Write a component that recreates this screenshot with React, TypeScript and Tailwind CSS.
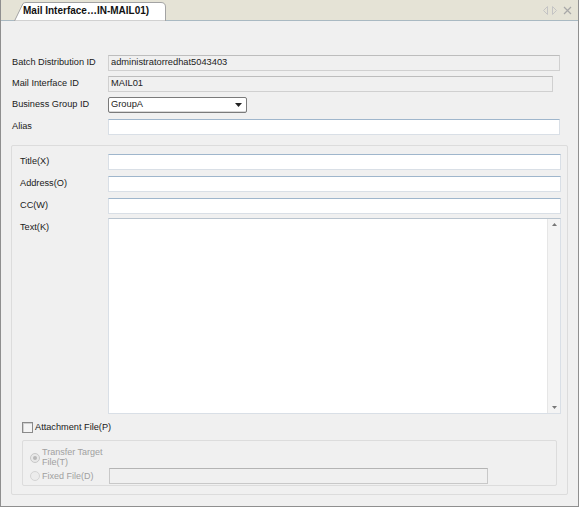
import React from 'react';

const font = "font-['Liberation_Sans',Arial,sans-serif]";

const Label: React.FC<{ children: React.ReactNode; w: string }> = ({ children, w }) => (
  <div className={`${w} shrink-0 text-[9.2px] text-[#1a1a1a] leading-none`}>{children}</div>
);

const ReadOnly: React.FC<{ value: string; right: string }> = ({ value, right }) => (
  <div
    className={`h-[16px] flex-1 ${right} bg-[#f0f0f0] border border-[#d0d0d0] border-t-[#bdbdbd] flex items-center px-[2px] text-[9.3px] text-[#222]`}
  >
    {value}
  </div>
);

const TextInput: React.FC<{ right?: string }> = ({ right = '' }) => (
  <div className={`h-[16px] flex-1 ${right} bg-white border border-[#d9dfe6] border-t-[#9fb6cc]`} />
);

const App: React.FC = () => {
  return (
    <div className={`w-[579px] h-[507px] bg-[#f0f0f0] border-x border-b border-[#8f8f8f] flex flex-col ${font}`}>
      {/* tab bar */}
      <div className="h-[21px] shrink-0 bg-[#e5e3d6] border-b border-[#a9b9c2] flex items-end relative">
        <div className="relative ml-[13px] w-[152px] h-[19px] -mb-px">
          <svg className="absolute inset-0" width="152" height="19" viewBox="0 0 152 19">
            <path d="M0.5 19 L9 1.5 Q10 0.5 12 0.5 L147 0.5 Q151.5 0.5 151.5 5 L151.5 19 Z" fill="#ffffff" stroke="#a3a3a3" />
          </svg>
          <div className="relative pl-[9px] pt-[4px] text-[10px] font-bold text-[#111] leading-none whitespace-nowrap">
            Mail Interface…IN-MAIL01)
          </div>
        </div>
        <div className="flex-1" />
        <div className="flex items-center gap-[4px] pr-[6px] pb-[5px] text-[#b5b5b5] text-[10px] leading-none">
          <svg width="5" height="9" viewBox="0 0 5 9"><path d="M4.5 0.5 L0.5 4.5 L4.5 8.5 Z" fill="none" stroke="#c4c4c4" /></svg>
          <svg width="5" height="9" viewBox="0 0 5 9"><path d="M0.5 0.5 L4.5 4.5 L0.5 8.5 Z" fill="none" stroke="#c4c4c4" /></svg>
          <svg width="9" height="9" viewBox="0 0 9 9" className="ml-[2px]"><path d="M1 1 L8 8 M8 1 L1 8" stroke="#a8a8a8" strokeWidth="1.2" /></svg>
        </div>
      </div>

      {/* header fields */}
      <div className="pl-[11px] pr-[18px] pt-[34px] flex flex-col">
        <div className="flex items-center h-[16px]">
          <Label w="w-[96px]">Batch Distribution ID</Label>
          <ReadOnly value="administratorredhat5043403" right="" />
        </div>
        <div className="flex items-center h-[16px] mt-[5px]">
          <Label w="w-[96px]">Mail Interface ID</Label>
          <ReadOnly value="MAIL01" right="mr-[7px]" />
        </div>
        <div className="flex items-center h-[16px] mt-[5px]">
          <Label w="w-[96px]">Business Group ID</Label>
          <div className="w-[139px] h-[16px] bg-white border border-[#7a7a7a] rounded-[2px] flex items-center justify-between px-[2px] text-[9.3px] text-[#222] shadow-[inset_0_-1px_0_#d8d8d8]">
            <span>GroupA</span>
            <svg width="7" height="4" viewBox="0 0 7 4" className="mr-[2px]"><path d="M0 0 L7 0 L3.5 4 Z" fill="#222" /></svg>
          </div>
        </div>
        <div className="flex items-center h-[16px] mt-[6px]">
          <Label w="w-[96px]">Alias</Label>
          <TextInput />
        </div>
      </div>

      {/* main group */}
      <div className="mx-[10px] mt-[10px] h-[350px] border border-[#dcdcdc] rounded-[2px] pl-[8px] pr-[6px] pt-[8px] flex flex-col">
        <div className="flex items-center h-[16px]">
          <Label w="w-[88px]">Title(X)</Label>
          <TextInput />
        </div>
        <div className="flex items-center h-[16px] mt-[6px]">
          <Label w="w-[88px]">Address(O)</Label>
          <TextInput />
        </div>
        <div className="flex items-center h-[16px] mt-[6px]">
          <Label w="w-[88px]">CC(W)</Label>
          <TextInput />
        </div>
        <div className="flex mt-[4px]">
          <Label w="w-[88px] pt-[5px]">Text(K)</Label>
          <div className="flex-1 h-[196px] bg-white border border-[#d9dfe6] border-t-[#b9c4cf] flex justify-end">
            <div className="w-[13px] h-full bg-[#f4f4f4] border-l border-[#e6e6e6] flex flex-col justify-between items-center py-[4px]">
              <svg width="5" height="3" viewBox="0 0 5 3"><path d="M0 3 L5 3 L2.5 0 Z" fill="#777" /></svg>
              <svg width="5" height="3" viewBox="0 0 5 3"><path d="M0 0 L5 0 L2.5 3 Z" fill="#777" /></svg>
            </div>
          </div>
        </div>

        <div className="flex items-center mt-[8px] ml-[2px] h-[11px]">
          <div className="w-[11px] h-[11px] border border-[#8a8a8a] bg-[#f4f4f4] shadow-[inset_1px_1px_0_#d0d0d0]" />
          <span className="ml-[2px] text-[9.2px] text-[#1a1a1a] leading-none">Attachment File(P)</span>
        </div>

        {/* inner group */}
        <div className="ml-[2px] mr-[4px] mt-[7px] h-[46px] border border-[#dcdcdc] rounded-[2px] pl-[7px] pt-[7px] flex flex-col">
          <div className="flex items-center">
            <div className="w-[10px] h-[10px] rounded-full border border-[#c8c8c8] bg-[#e8e8e8] flex items-center justify-center">
              <div className="w-[4px] h-[4px] rounded-full bg-[#b8b8b8]" />
            </div>
            <div className="ml-[2px] text-[9px] text-[#a0a0a0] leading-[9.5px]">
              Transfer Target<br />File(T)
            </div>
          </div>
          <div className="flex items-center mt-[1px]">
            <div className="w-[10px] h-[10px] rounded-full border border-[#d4d4d4] bg-[#ececec]" />
            <div className="ml-[2px] w-[67px] text-[9px] text-[#a0a0a0] leading-none">Fixed File(D)</div>
            <div className="w-[379px] h-[16px] bg-[#f0f0f0] border border-[#c8c8c8] border-t-[#b4b4b4]" />
          </div>
        </div>
      </div>
    </div>
  );
};

export default App;
